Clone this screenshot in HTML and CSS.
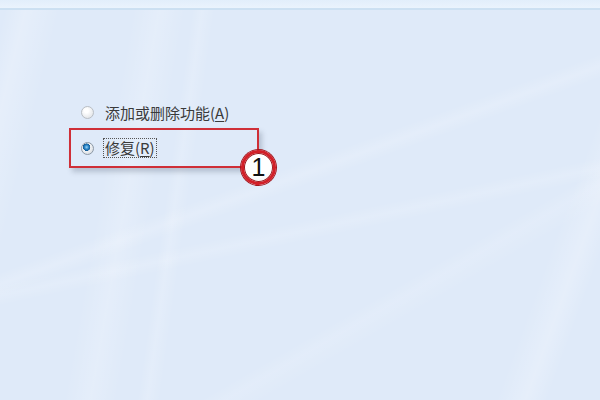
FILE: index.html
```html
<!DOCTYPE html>
<html lang="zh-CN">
<head>
    <meta charset="UTF-8">
    <meta name="viewport" content="width=device-width, initial-scale=1.0">
    <title>修复</title>
    <link rel="stylesheet" href="styles.css">
</head>
<body>

    <div class="window">
        <div class="top-strip"></div>

        <div class="options">
            <label class="option">
                <span class="radio"></span>
                <span class="option-text">添加或删除功能(<u>A</u>)</span>
            </label>
            <label class="option selected">
                <span class="radio checked"></span>
                <span class="option-text focused">修复(<u>R</u>)</span>
                <span class="step-badge">1</span>
            </label>
        </div>
    </div>

</body>
</html>
```

FILE: styles.css
```css
body {
    margin: 0;
    font-family: "Noto Sans CJK SC", "Noto Sans", sans-serif;
}
.window {
    width: 600px;
    height: 400px;
    overflow: hidden;
    background-color: #dfeaf9;
    background-image:
        linear-gradient(104deg, transparent 1%, rgba(255,255,255,0.22) 4%, transparent 9%),
        linear-gradient(100deg, transparent 20%, rgba(255,255,255,0.18) 24%, transparent 28%),
        linear-gradient(98deg, transparent 29.5%, rgba(255,255,255,0.15) 31%, transparent 33%),
        linear-gradient(160deg, transparent 44%, rgba(255,255,255,0.16) 46%, transparent 48%),
        linear-gradient(168deg, transparent 54%, rgba(255,255,255,0.14) 56%, transparent 58%),
        linear-gradient(-70deg, transparent 7%, rgba(255,255,255,0.22) 10%, transparent 14%),
        linear-gradient(150deg, transparent 69%, rgba(255,255,255,0.12) 71%, transparent 74%);
}
.top-strip {
    height: 8px;
    background: linear-gradient(#e2eefb, #eaf3fd);
    border-bottom: 2px solid #cce0f2;
}
.options {
    padding: 92px 0 0 69px;
}
.option {
    position: relative;
    display: flex;
    align-items: center;
    gap: 11px;
    height: 20px;
    padding-left: 12px;
    font-size: 15px;
    color: #3a3a3a;
}
.option.selected {
    box-sizing: border-box;
    width: 190px;
    height: 40px;
    margin-top: 6px;
    padding-left: 10px;
    border: 2px solid #cf2f38;
    box-shadow: 3px 4px 5px rgba(60, 70, 90, 0.25);
}
.option-text u {
    text-decoration-thickness: 1px;
    text-underline-offset: 2px;
}
.option-text.focused {
    margin-left: -2px;
    padding: 0 1px;
    border: 1px dotted #555;
    line-height: 18px;
}
.radio {
    box-sizing: border-box;
    width: 13px;
    height: 13px;
    border-radius: 50%;
    border: 1px solid #b9bec4;
    background: radial-gradient(circle at 40% 35%, #ffffff 20%, #dde0e4 90%);
}
.radio.checked {
    border-color: #8d99a6;
    background:
        radial-gradient(circle at 42% 38%, #9fd4f5 0, #2a86c8 22%, #145a96 38%, transparent 42%),
        radial-gradient(circle at 40% 35%, #ffffff 20%, #d3d8de 90%);
}
.step-badge {
    position: absolute;
    right: -19px;
    bottom: -19px;
    box-sizing: border-box;
    width: 35px;
    height: 35px;
    border-radius: 50%;
    border: 3px solid #d21f28;
    background: radial-gradient(circle at 45% 35%, #ffffff 55%, #e8e8e8 100%);
    box-shadow: inset 0 0 0 1px #9c1b20, 0 0 0 1px #a3161c;
    display: flex;
    align-items: center;
    justify-content: center;
    font-family: "Liberation Sans", Arial, sans-serif;
    font-size: 25px;
    color: #111;
    line-height: 1;
}
```
